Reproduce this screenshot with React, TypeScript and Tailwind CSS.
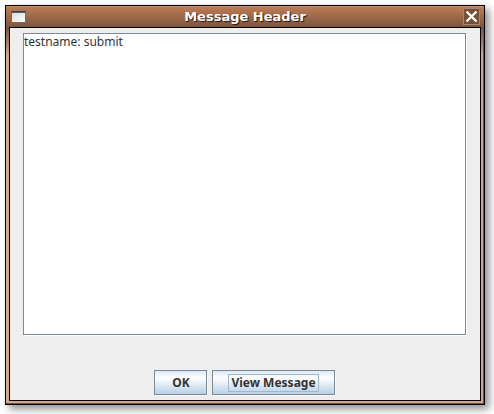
import React from "react";

const buttonClass =
  "h-[25px] min-w-[53px] border border-[#7a8a99] bg-linear-to-b from-[#dde8f3] via-white via-30% to-[#b8cfe5] px-4 font-['Noto_Sans','Open_Sans',sans-serif] text-[12px] leading-4 font-bold text-[#333333] shadow-[1px_1px_0_#f8f8f8]";

export default function App() {
  return (
    <div className="min-h-screen bg-white pt-[5px] pr-[9px] pb-[9px] pl-[5px]">
      <section
        aria-labelledby="dialog-title"
        className="flex h-[400px] flex-col border border-black bg-[#d2a78e] bg-linear-to-b from-[#bd7b55] via-[#7c563e] via-[22px] to-[#d2a78e] to-[50px] shadow-[4px_4px_8px_rgba(0,0,0,0.45)]"
      >
        <header className="flex h-[21px] shrink-0 items-center justify-between border-t border-[#d38d65] bg-linear-to-b from-[#bd7b55] to-[#7c563e] pr-[4px] pb-px pl-[3px]">
          <svg width="17" height="14" viewBox="0 0 17 14" aria-hidden="true" className="ml-px">
            <defs>
              <linearGradient id="app-icon" x1="0" y1="0" x2="1" y2="1">
                <stop offset="0" stopColor="#d5d9da" />
                <stop offset="1" stopColor="#ffffff" />
              </linearGradient>
            </defs>
            <rect x="1.5" y="1.5" width="14" height="11" fill="url(#app-icon)" stroke="#6c6d6b" />
            <path d="M1 1.5H16" stroke="#344553" />
            <path d="M2 2.5H15" stroke="#53616b" />
          </svg>
          <h1
            id="dialog-title"
            className="font-['DejaVu_Sans',sans-serif] text-[13px] leading-4 font-bold text-white [text-shadow:1px_1px_1px_#20140c]"
          >
            Message Header
          </h1>
          <button
            type="button"
            aria-label="Close"
            className="flex size-[17px] items-center justify-center border border-[#a98670] bg-[#765036]"
          >
            <svg width="15" height="15" viewBox="0 0 15 15" aria-hidden="true" className="shrink-0">
              <path d="M2.5 2.5 12.5 12.5M12.5 2.5 2.5 12.5" stroke="#ffffff" strokeWidth="2.4" />
            </svg>
          </button>
        </header>
        <div className="flex min-h-0 grow border-r border-b border-[#70503b] pr-[2px] pb-[2px] pl-[3px]">
          <main className="flex grow flex-col border border-black bg-[#eeeeee] px-[14px] pt-[5px] pb-[5px] pl-[13px]">
            <textarea
              aria-label="Message header"
              defaultValue="testname: submit"
              spellCheck={false}
              className="block h-[302px] w-full resize-none border border-[#7a8a99] bg-white font-['Noto_Sans','Open_Sans',sans-serif] text-[12px] leading-4 text-[#333333] shadow-[1px_1px_0_#ffffff] outline-none"
            />
            <div className="mt-auto flex justify-center gap-[5px]">
              <button type="button" className={buttonClass}>
                OK
              </button>
              <button type="button" className={buttonClass}>
                <span className="block px-[2px] outline outline-[#a3b8cc]">View Message</span>
              </button>
            </div>
          </main>
        </div>
      </section>
    </div>
  );
}
